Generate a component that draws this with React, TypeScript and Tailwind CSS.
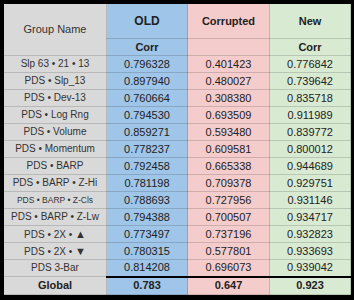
import React from 'react';

type Row = { name: React.ReactNode; key: string; old: string; bad: string; neu: string; small?: boolean };

const tri = (t: string) => <span className="text-[11px]">{t}</span>;

const rows: Row[] = [
  { key: 'slp', name: 'Slp 63 • 21 • 13', old: '0.796328', bad: '0.401423', neu: '0.776842' },
  { key: 'slp13', name: 'PDS • Slp_13', old: '0.897940', bad: '0.480027', neu: '0.739642' },
  { key: 'dev', name: 'PDS • Dev-13', old: '0.760664', bad: '0.308380', neu: '0.835718' },
  { key: 'log', name: 'PDS • Log Rng', old: '0.794530', bad: '0.693509', neu: '0.911989' },
  { key: 'vol', name: 'PDS • Volume', old: '0.859271', bad: '0.593480', neu: '0.839772' },
  { key: 'mom', name: 'PDS • Momentum', old: '0.778237', bad: '0.609581', neu: '0.800012' },
  { key: 'barp', name: 'PDS • BARP', old: '0.792458', bad: '0.665338', neu: '0.944689' },
  { key: 'zhi', name: 'PDS • BARP • Z-Hi', old: '0.781198', bad: '0.709378', neu: '0.929751' },
  { key: 'zcls', name: 'PDS • BARP • Z-Cls', old: '0.788693', bad: '0.727956', neu: '0.931146', small: true },
  { key: 'zlw', name: 'PDS • BARP • Z-Lw', old: '0.794388', bad: '0.700507', neu: '0.934717' },
  { key: 'up', name: <>PDS • 2X • {tri('▲')}</>, old: '0.773497', bad: '0.737196', neu: '0.932823' },
  { key: 'down', name: <>PDS • 2X • {tri('▼')}</>, old: '0.780315', bad: '0.577801', neu: '0.933693' },
  { key: 'bar3', name: 'PDS 3-Bar', old: '0.814208', bad: '0.696073', neu: '0.939042' },
];

const cell = 'border border-black/15 text-center p-0 leading-none';

export default function App() {
  return (
    <div
      className="w-[354px] h-[300px] bg-black pt-[3px] pl-[3px] pr-[4px] pb-[4px] text-[11px] text-[#222]"
      style={{ fontFamily: '"Liberation Sans", Arial, sans-serif' }}
    >
      <table className="w-full table-fixed border-collapse">
        <colgroup>
          <col className="w-[103px]" />
          <col className="w-[81px]" />
          <col className="w-[82px]" />
          <col className="w-[81px]" />
        </colgroup>
        <thead>
          <tr className="h-[35px]">
            <th rowSpan={2} className={`${cell} bg-[#d9d9d9] font-normal text-[#333]`}>Group Name</th>
            <th className={`${cell} bg-[#9fc5e8] font-bold text-[12px]`}>OLD</th>
            <th className={`${cell} bg-[#f4cccc] font-bold`}>Corrupted</th>
            <th className={`${cell} bg-[#d9ead3] font-bold`}>New</th>
          </tr>
          <tr className="h-[17px]">
            <th className={`${cell} bg-[#9fc5e8] font-bold`}>Corr</th>
            <th className={`${cell} bg-[#f4cccc]`}></th>
            <th className={`${cell} bg-[#d9ead3] font-bold`}>Corr</th>
          </tr>
        </thead>
        <tbody>
          {rows.map((r) => (
            <tr key={r.key} className="h-[17px]">
              <td className={`${cell} bg-[#d9d9d9] text-[#333] ${r.small ? 'text-[8.5px]' : 'text-[10px]'}`}>{r.name}</td>
              <td className={`${cell} bg-[#9fc5e8]`}>{r.old}</td>
              <td className={`${cell} bg-[#f4cccc]`}>{r.bad}</td>
              <td className={`${cell} bg-[#d9ead3]`}>{r.neu}</td>
            </tr>
          ))}
          <tr className="h-[18px]">
            <td className={`${cell} bg-[#d9d9d9] font-bold`}>Global</td>
            <td className={`${cell} bg-[#9fc5e8] font-bold border-t-2 border-t-black`}>0.783</td>
            <td className={`${cell} bg-[#f4cccc] font-bold border-t-2 border-t-black`}>0.647</td>
            <td className={`${cell} bg-[#d9ead3] font-bold border-t-2 border-t-black`}>0.923</td>
          </tr>
        </tbody>
      </table>
    </div>
  );
}
